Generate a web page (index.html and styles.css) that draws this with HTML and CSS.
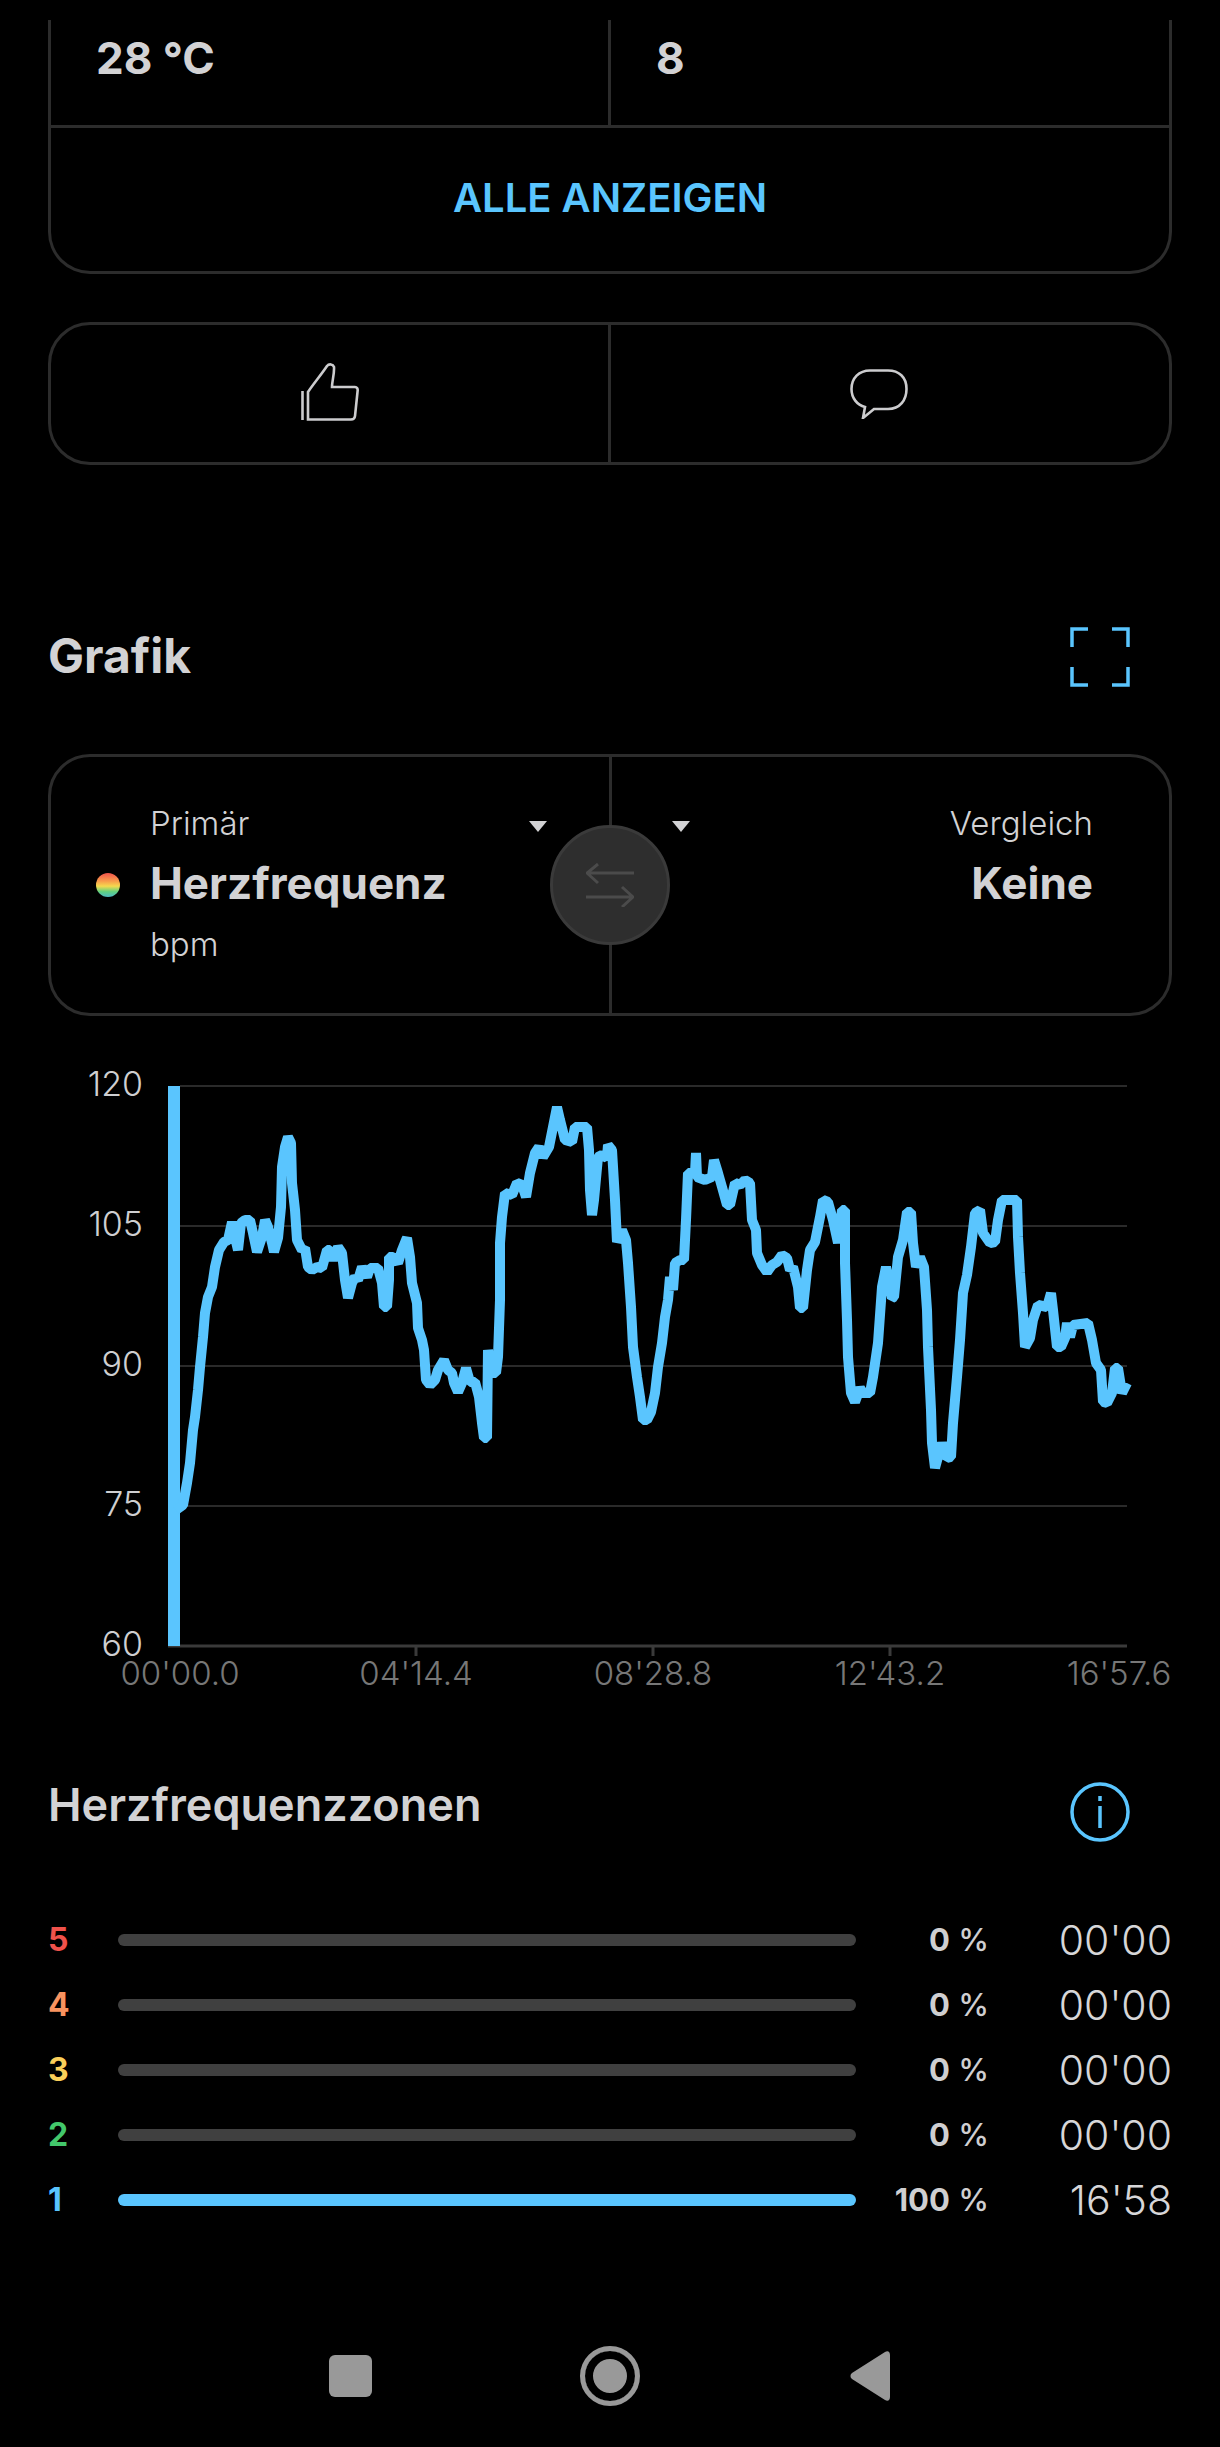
FILE: index.html
```html
<!DOCTYPE html>
<html lang="de">
<head>
	<meta charset="utf-8" />
	<title>Grafik</title>
	<link rel="stylesheet" href="styles.css">
</head>
<body>
<main class="page">

	<!-- summary card, scrolled off at the top -->
	<section class="card stats">
		<div class="stats-row">
			<div class="stat">28 °C</div>
			<div class="stat">8</div>
		</div>
		<div class="show-all">ALLE ANZEIGEN</div>
	</section>

	<section class="card actions">
		<div class="action">
			<svg class="icon-thumb" viewBox="0 0 58 58" fill="none" stroke="#ccccce" stroke-width="2.6">
				<path d="M1.5 28V57"/>
				<path d="M7 56.5V29C13 20 20 12 26 3C28 0.5 32 1 33 4C33.500 11 31 18 31 24H54C56 24 57 26 56.600 28L54 53C53.800 55.500 52 56.500 50 56.500Z"/>
			</svg>
		</div>
		<div class="action">
			<svg class="icon-comment" viewBox="0 0 58 50" fill="none" stroke="#ccccce" stroke-width="2.6">
				<path d="M15 38L13 49L24 40H38C50 40 56.500 31 56.500 20C56.500 8 49 1.500 38 1.500H20C9 1.500 1.500 9 1.500 20C1.500 29 7 36 15 38Z"/>
			</svg>
		</div>
	</section>

	<header class="section-head graph-head">
		<h2>Grafik</h2>
		<svg class="head-icon" viewBox="0 0 60 60" fill="none" stroke="#5ac5fe" stroke-width="3.500">
			<path d="M18 2H2V20M42 2H58V20M2 40V58H18M58 40V58H42"/>
		</svg>
	</header>

	<section class="card picker">
		<div class="picker-side">
			<span class="dot"></span>
			<div class="picker-text">
				<div class="picker-label">Primär <span class="caret caret-left"></span></div>
				<div class="picker-value">Herzfrequenz</div>
				<div class="picker-label">bpm</div>
			</div>
		</div>
		<div class="picker-side picker-right">
			<div class="picker-label"><span class="caret caret-right"></span>Vergleich</div>
			<div class="picker-value">Keine</div>
		</div>
		<div class="swap">
			<svg viewBox="0 0 48 44" fill="none" stroke="#4b4b4b" stroke-width="3">
				<path d="M48 10H1M12 1L1 10L12 20M0 34H47M36 24L47 34L36 44"/>
			</svg>
		</div>
	</section>

	<svg class="chart" viewBox="0 1060 1220 640">
		<g class="grid">
			<line x1="180" y1="1086" x2="1127" y2="1086"/>
			<line x1="180" y1="1226" x2="1127" y2="1226"/>
			<line x1="180" y1="1366" x2="1127" y2="1366"/>
			<line x1="180" y1="1506" x2="1127" y2="1506"/>
		</g>
		<g class="axis">
			<line x1="168" y1="1646" x2="1127" y2="1646"/>
			<line x1="416" y1="1646" x2="416" y2="1656"/>
			<line x1="653" y1="1646" x2="653" y2="1656"/>
			<line x1="890" y1="1646" x2="890" y2="1656"/>
		</g>
		<g class="y-labels">
			<text x="143" y="1096">120</text>
			<text x="143" y="1236">105</text>
			<text x="143" y="1376">90</text>
			<text x="143" y="1516">75</text>
			<text x="143" y="1656">60</text>
		</g>
		<g class="x-labels">
			<text x="180" y="1685">00'00.0</text>
			<text x="416" y="1685">04'14.4</text>
			<text x="653" y="1685">08'28.8</text>
			<text x="890" y="1685">12'43.2</text>
			<text x="1119" y="1685">16'57.6</text>
		</g>
		<rect class="start-bar" x="168" y="1086" width="12" height="560"/>
		<polyline class="hr-line" points="176,1510 183,1505 187,1483 190,1463 193,1430 195,1417 198,1390 200,1367 203,1337 205,1313 208,1297 212,1287 215,1267 219,1250 224,1242 228,1240 232,1222 234,1233 238,1250 241,1223 245,1220 250,1220 253,1233 257,1252 262,1237 265,1220 268,1227 272,1243 274,1252 278,1238 281,1207 282,1167 285,1147 288,1137 291,1143 292,1183 295,1210 297,1240 302,1250 305,1248 308,1267 312,1270 317,1267 322,1268 327,1250 330,1250 333,1260 338,1247 342,1253 345,1280 348,1298 352,1283 355,1277 358,1280 362,1267 367,1277 370,1268 378,1268 382,1283 384,1307 387,1307 389,1280 389,1257 393,1257 398,1263 402,1250 406,1240 407,1238 410,1257 412,1283 417,1303 418,1328 422,1340 424,1350 426,1380 430,1385 435,1380 438,1370 444,1360 448,1370 452,1373 454,1383 458,1392 462,1383 466,1368 470,1382 475,1382 479,1397 482,1423 484,1438 487,1438 488,1350 492,1373 496,1373 498,1357 500,1300 500,1243 502,1217 505,1193 512,1195 517,1183 522,1185 526,1197 530,1173 535,1153 539,1147 543,1157 549,1147 553,1127 557,1107 560,1120 565,1140 572,1142 575,1127 587,1127 589,1150 590,1190 592,1215 594,1200 598,1157 602,1155 607,1158 608,1145 612,1150 615,1200 617,1242 622,1230 626,1240 628,1263 631,1307 633,1347 637,1377 640,1397 643,1420 647,1420 651,1412 655,1393 658,1367 662,1343 665,1317 668,1300 670,1277 673,1290 675,1263 680,1260 684,1260 686,1220 688,1173 695,1173 696,1153 697,1177 705,1180 712,1177 714,1160 718,1173 722,1187 727,1205 730,1205 735,1183 740,1185 745,1180 750,1183 752,1220 756,1230 757,1253 762,1265 767,1272 772,1265 777,1262 782,1255 787,1258 790,1270 793,1267 798,1287 800,1308 803,1308 807,1270 810,1250 815,1242 820,1217 823,1200 828,1202 833,1220 838,1243 842,1210 845,1210 845,1263 847,1320 848,1357 851,1393 855,1402 860,1388 863,1393 870,1393 873,1377 878,1343 882,1287 886,1267 892,1298 894,1297 898,1257 903,1240 907,1212 911,1212 913,1243 916,1267 920,1257 924,1267 927,1310 928,1347 931,1410 932,1443 935,1468 938,1457 942,1443 947,1458 951,1457 953,1423 957,1377 960,1340 963,1293 967,1275 971,1247 975,1213 980,1210 983,1233 990,1243 995,1242 998,1220 1002,1200 1017,1200 1018,1237 1020,1273 1023,1313 1025,1347 1030,1338 1033,1320 1038,1305 1047,1307 1051,1293 1053,1310 1057,1347 1061,1347 1065,1338 1067,1323 1070,1337 1073,1325 1088,1323 1092,1340 1096,1363 1101,1370 1103,1402 1107,1403 1112,1393 1115,1368 1118,1368 1122,1393 1127,1383"/>
	</svg>

	<header class="section-head zones-head">
		<h2>Herzfrequenzzonen</h2>
		<svg class="head-icon" viewBox="0 0 60 60" fill="none" stroke="#5ac5fe" stroke-width="3.500">
			<circle cx="30" cy="30" r="28"/>
			<path d="M30 24V46M30 14V19"/>
		</svg>
	</header>

	<section class="zones">
		<div class="zone">
			<span class="zone-num z5">5</span>
			<span class="zone-bar"></span>
			<span class="zone-pct"><b>0</b> %</span>
			<span class="zone-time">00'00</span>
		</div>
		<div class="zone">
			<span class="zone-num z4">4</span>
			<span class="zone-bar"></span>
			<span class="zone-pct"><b>0</b> %</span>
			<span class="zone-time">00'00</span>
		</div>
		<div class="zone">
			<span class="zone-num z3">3</span>
			<span class="zone-bar"></span>
			<span class="zone-pct"><b>0</b> %</span>
			<span class="zone-time">00'00</span>
		</div>
		<div class="zone">
			<span class="zone-num z2">2</span>
			<span class="zone-bar"></span>
			<span class="zone-pct"><b>0</b> %</span>
			<span class="zone-time">00'00</span>
		</div>
		<div class="zone">
			<span class="zone-num z1">1</span>
			<span class="zone-bar zone-bar-on"></span>
			<span class="zone-pct"><b>100</b> %</span>
			<span class="zone-time">16'58</span>
		</div>
	</section>
</main>

<nav class="navbar">
	<div class="nav-btn"><span class="nav-square"></span></div>
	<div class="nav-btn"><span class="nav-circle"></span></div>
	<div class="nav-btn">
		<svg class="nav-back" viewBox="0 0 40 50" fill="#999">
			<path d="M35 1C38 -1 40 1 40 4V46C40 49 38 51 35 49L2 28C0 26.500 0 23.500 2 22Z"/>
		</svg>
	</div>
</nav>
</body>
</html>
```

FILE: styles.css
```css
*{
	box-sizing:border-box;
}

html,body{
	margin:0;
	background:#000;
}

body{
	width:1220px;
	height:2447px;
	overflow:hidden;
	color:#d2d2d4;
	font-family:"Inter","Liberation Sans",sans-serif;
}

.page{
	padding:20px 48px 0;
}

/* cards */
.card{
	border:3px solid #2c2c2c;
	border-radius:42px;
}

.stats{
	height:254px;
	border-top:0;
	border-top-left-radius:0;
	border-top-right-radius:0;
}

.stats-row{
	display:flex;
	height:108px;
	border-bottom:3px solid #2c2c2c;
}

.stat{
	flex:1;
	padding:10px 0 0 45px;
	font-size:44px;
	line-height:56px;
	font-weight:700;
}

.stat:first-child{
	flex:none;
	width:560px;
	border-right:3px solid #2c2c2c;
}

.show-all{
	padding-top:46px;
	text-align:center;
	color:#5ac5fe;
	font-size:40px;
	line-height:48px;
	font-weight:600;
}

.actions{
	display:flex;
	height:143px;
	margin-top:48px;
}

.action{
	flex:1;
	display:flex;
	align-items:center;
	justify-content:center;
}

.action:first-child{
	flex:none;
	width:560px;
	border-right:3px solid #2c2c2c;
}

.icon-thumb{
	width:58px;
	height:58px;
	margin-top:-3px;
}

.icon-comment{
	width:58px;
	height:50px;
	margin-right:22px;
}

/* section headings */
.section-head{
	display:flex;
	justify-content:space-between;
	align-items:flex-start;
	padding-right:42px;
}

.section-head h2{
	margin:0;
	font-weight:600;
}

.head-icon{
	width:60px;
	height:60px;
}

.graph-head{
	margin-top:162px;
}

.graph-head h2{
	font-size:48px;
	font-weight:700;
	line-height:58px;
}

.zones-head{
	margin-top:82px;
}

.zones-head h2{
	font-size:45px;
	line-height:46px;
}

/* primary / compare picker */
.picker{
	position:relative;
	display:flex;
	height:262px;
	margin-top:67px;
}

.picker-side{
	flex:1;
	position:relative;
	display:flex;
	padding:46px 76px 0 45px;
}

.picker-side:first-child{
	border-right:3px solid #2c2c2c;
}

.picker-right{
	flex-direction:column;
	align-items:flex-end;
}

.dot{
	flex:none;
	width:24px;
	height:24px;
	margin-top:70px;
	margin-right:30px;
	border-radius:50%;
	background:linear-gradient(#f0524b 0%,#f9a04c 35%,#f5d94e 55%,#5fd080 78%,#4fb9c4 100%);
}

.picker-label{
	font-size:33px;
	font-weight:300;
	line-height:40px;
	color:#d2d2d4;
}

.picker-value{
	font-size:44px;
	line-height:60px;
	margin:10px 0 11px;
	font-weight:700;
}

.caret{
	position:absolute;
	top:64px;
	border-left:9.500px solid transparent;
	border-right:9.500px solid transparent;
	border-top:11px solid #d2d2d4;
}

.caret-left{
	right:62px;
}

.caret-right{
	left:60px;
}

.swap{
	position:absolute;
	left:50%;
	top:68px;
	display:flex;
	align-items:center;
	justify-content:center;
	width:120px;
	height:120px;
	margin-left:-60px;
	border-radius:50%;
	border:3px solid #3a3a3a;
	background:#2e2e2e;
}

.swap svg{
	width:48px;
	height:44px;
}

/* chart */
.chart{
	display:block;
	width:1220px;
	height:640px;
	margin:44px 0 0 -48px;
}

.grid line{
	stroke:#2a2a2a;
	stroke-width:2;
}

.axis line{
	stroke:#3a3a3a;
	stroke-width:3;
}

.y-labels text{
	text-anchor:end;
	fill:#cfcfd1;
	font-size:34px;
	font-weight:300;
}

.x-labels text{
	text-anchor:middle;
	fill:#777;
	font-size:33px;
	font-weight:300;
}

.start-bar{
	fill:#5ac5fe;
}

.hr-line{
	fill:none;
	stroke:#5ac5fe;
	stroke-width:10;
	stroke-linejoin:bevel;
}

/* heart rate zones */
.zones{
	margin-top:65px;
}

.zone{
	display:flex;
	align-items:center;
	height:65px;
}

.zone-num{
	width:70px;
	font-size:32px;
	font-weight:700;
}

.z5{ color:#f0524b; }
.z4{ color:#f9935f; }
.z3{ color:#fbcf5a; }
.z2{ color:#43c86b; }
.z1{ color:#5ac5fe; }

.zone-bar{
	width:738px;
	height:12px;
	border-radius:6px;
	background:#404040;
}

.zone-bar-on{
	background:#5ac5fe;
}

.zone-pct{
	width:133px;
	text-align:right;
	font-size:31px;
	font-weight:500;
	color:#cfcfd1;
}

.zone-pct b{
	font-weight:700;
}

.zone-time{
	width:183px;
	text-align:right;
	font-size:41px;
	font-weight:300;
	color:#d6d6d8;
}

/* android nav bar */
.navbar{
	display:flex;
	justify-content:center;
	align-items:center;
	height:60px;
	margin-top:114px;
}

.nav-btn{
	display:flex;
	justify-content:center;
	width:260px;
}

.nav-square{
	width:43px;
	height:42px;
	border-radius:6px;
	background:#999;
}

.nav-circle{
	display:flex;
	width:60px;
	height:60px;
	border:5px solid #999;
	border-radius:50%;
	box-shadow:inset 0 0 0 8px #000,inset 0 0 0 30px #999;
}

.nav-back{
	width:40px;
	height:50px;
}
```
